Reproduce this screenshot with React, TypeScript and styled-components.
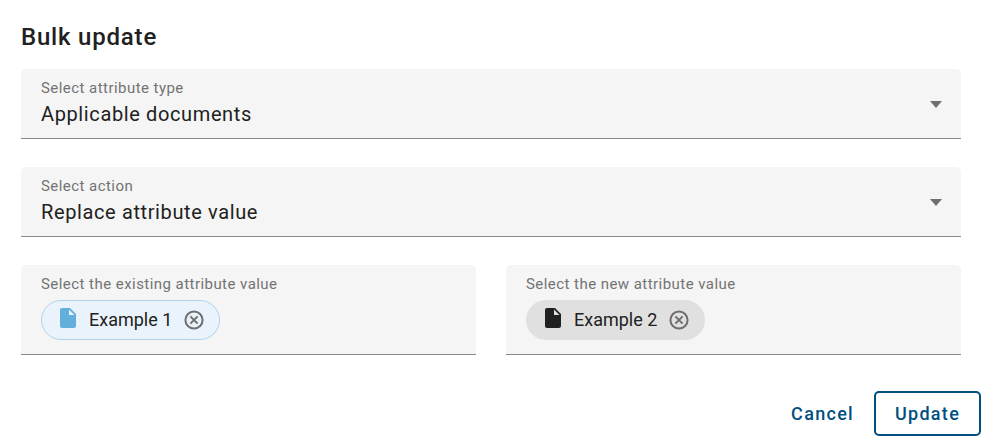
import React from "react";
import styled, { createGlobalStyle } from "styled-components";

const GlobalStyle = createGlobalStyle`
  html, body {
    margin: 0;
    padding: 0;
    background: #ffffff;
    font-family: Roboto, "Liberation Sans", sans-serif;
  }
`;

const Dialog = styled.div`
  width: 989px;
  height: 442px;
  box-sizing: border-box;
  padding: 21px 8px 0 21px;
  overflow: hidden;
`;

const Title = styled.h2`
  margin: 0 0 16px;
  font-size: 24px;
  line-height: 32px;
  font-weight: 500;
  letter-spacing: 0.8px;
  color: #212121;
`;

const Fields = styled.div`
  width: 940px;
  display: flex;
  flex-direction: column;
  gap: 28px;
`;

const Row = styled.div`
  display: grid;
  grid-template-columns: 455px 455px;
  column-gap: 30px;
`;

const Field = styled.div<{ $tall?: boolean }>`
  position: relative;
  box-sizing: border-box;
  height: ${(p) => (p.$tall ? "90px" : "70px")};
  padding: 10px 20px 0;
  background: #f5f5f5;
  border-radius: 5px 5px 0 0;
  border-bottom: 1px solid #8a8a8a;
`;

const Label = styled.div`
  font-size: 15px;
  line-height: 18px;
  letter-spacing: 0.45px;
  color: #737373;
`;

const Value = styled.div`
  margin-top: 4px;
  font-size: 20px;
  line-height: 26px;
  letter-spacing: 0.62px;
  color: #212121;
`;

const Arrow = styled.span`
  position: absolute;
  top: 32px;
  right: 19px;
  width: 0;
  height: 0;
  border-left: 6.5px solid transparent;
  border-right: 6.5px solid transparent;
  border-top: 7px solid #6f6f6f;
`;

const Chip = styled.div<{ $variant: "blue" | "grey" }>`
  display: inline-flex;
  align-items: center;
  box-sizing: border-box;
  height: 40px;
  margin-top: 7px;
  padding: 0 15px 0 14px;
  border-radius: 20px;
  background: ${(p) => (p.$variant === "blue" ? "#eaf3fb" : "#e0e0e0")};
  border: 1px solid ${(p) => (p.$variant === "blue" ? "#acd5ec" : "#e0e0e0")};
`;

const ChipText = styled.span`
  margin: 0 12px 0 9px;
  font-size: 18px;
  line-height: 24px;
  color: #212121;
`;

const DocSvg = styled.svg`
  margin-bottom: 5px;
  flex: none;
`;

const Actions = styled.div`
  display: flex;
  justify-content: flex-end;
  align-items: center;
  gap: 20px;
  margin-top: 36px;
`;

const Button = styled.button<{ $outlined?: boolean }>`
  box-sizing: border-box;
  height: 45px;
  width: ${(p) => (p.$outlined ? "107px" : "auto")};
  padding: 0;
  background: #ffffff;
  border: ${(p) => (p.$outlined ? "2px solid #004f7f" : "none")};
  border-radius: 5px;
  font-family: inherit;
  font-size: 18px;
  font-weight: 500;
  letter-spacing: 1.3px;
  color: #004f7f;
`;

const DocIcon: React.FC<{ color: string }> = ({ color }) => (
  <DocSvg width="24" height="24" viewBox="0 0 24 24">
    <path
      d="M6 2c-1.1 0-1.99.9-1.99 2L4 20c0 1.1.89 2 1.99 2H18c1.1 0 2-.9 2-2V8l-6-6H6zm7 7V3.5L18.5 9H13z"
      fill={color}
    />
  </DocSvg>
);

const ClearIcon: React.FC = () => (
  <svg width="20" height="20" viewBox="0 0 20 20" fill="none" stroke="#6e6e6e" strokeWidth="2">
    <circle cx="10" cy="10" r="8.6" />
    <path d="M6.4 6.4l7.2 7.2M13.6 6.4l-7.2 7.2" />
  </svg>
);

const App: React.FC = () => (
  <>
    <GlobalStyle />
    <Dialog>
      <Title>Bulk update</Title>
      <Fields>
        <Field>
          <Label>Select attribute type</Label>
          <Value>Applicable documents</Value>
          <Arrow />
        </Field>
        <Field>
          <Label>Select action</Label>
          <Value>Replace attribute value</Value>
          <Arrow />
        </Field>
        <Row>
          <Field $tall>
            <Label>Select the existing attribute value</Label>
            <Chip $variant="blue">
              <DocIcon color="#63afdc" />
              <ChipText>Example 1</ChipText>
              <ClearIcon />
            </Chip>
          </Field>
          <Field $tall>
            <Label>Select the new attribute value</Label>
            <Chip $variant="grey">
              <DocIcon color="#212121" />
              <ChipText>Example 2</ChipText>
              <ClearIcon />
            </Chip>
          </Field>
        </Row>
      </Fields>
      <Actions>
        <Button>Cancel</Button>
        <Button $outlined>Update</Button>
      </Actions>
    </Dialog>
  </>
);

export default App;
